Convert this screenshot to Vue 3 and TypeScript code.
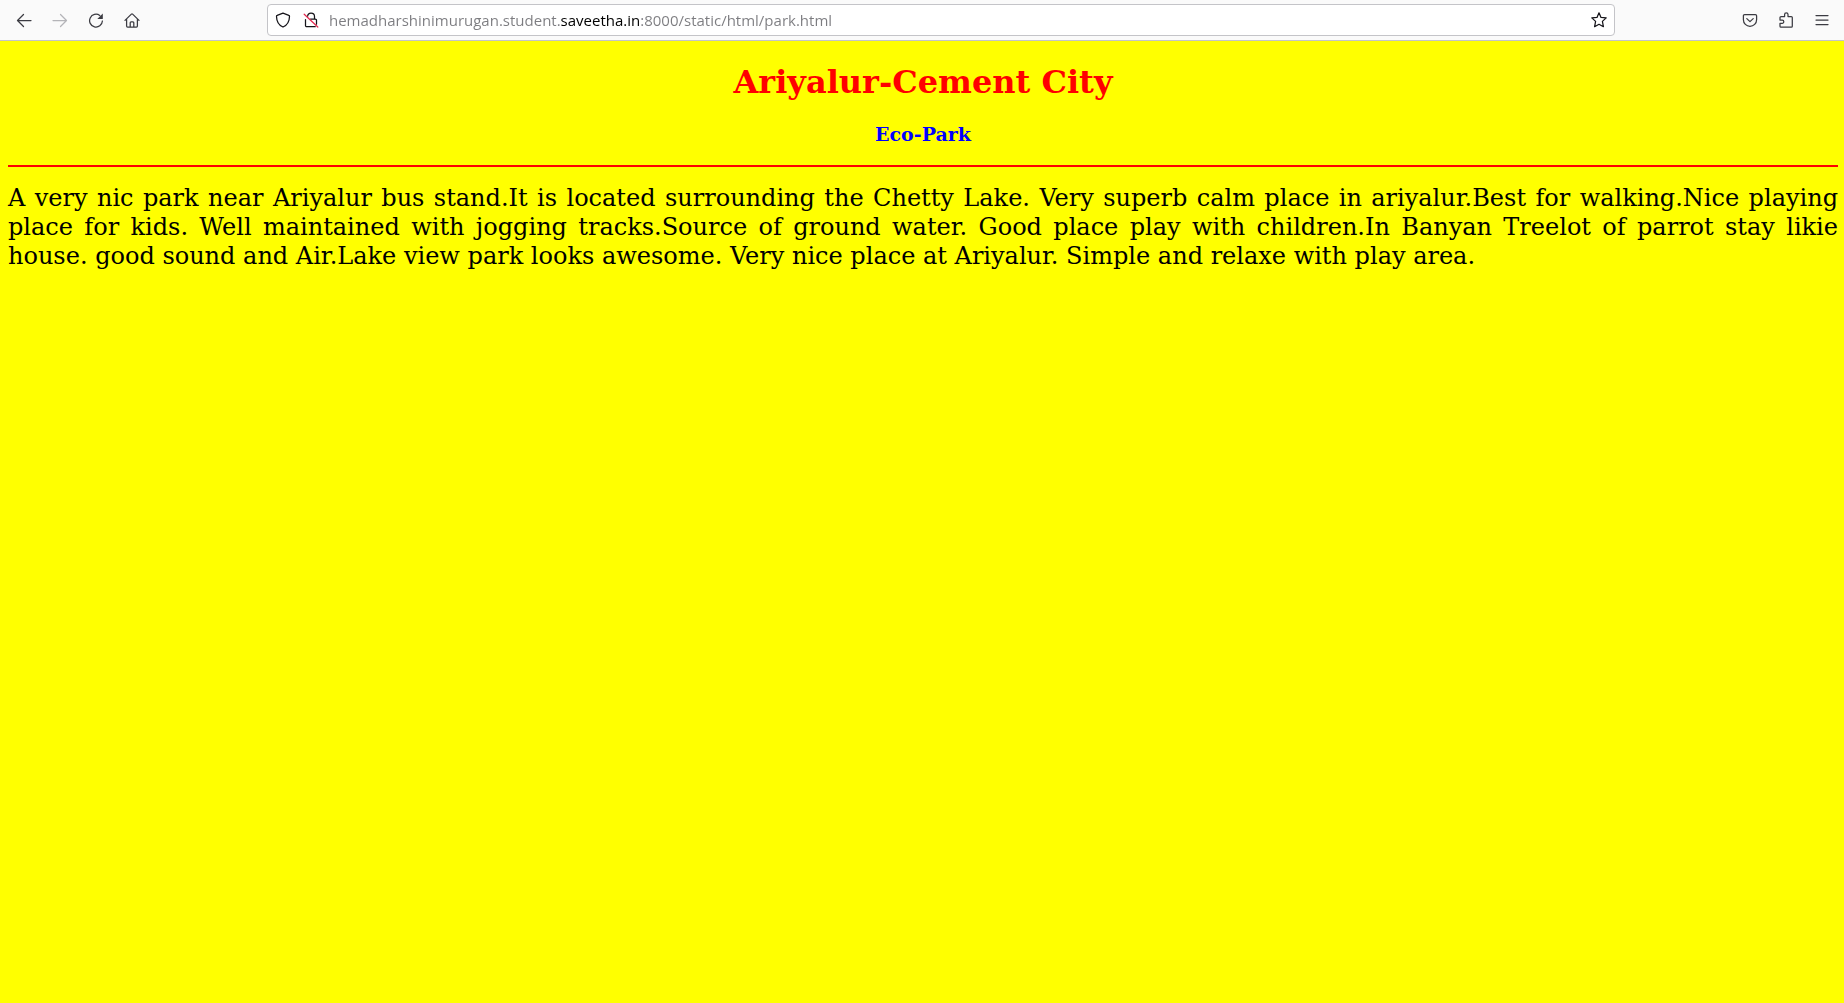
<script setup lang="ts">
import { ref } from 'vue'

const address = ref('hemadharshinimurugan.student.saveetha.in:8000/static/html/park.html')
</script>

<template>
  <div class="browser">
    <header class="toolbar">
      <nav class="group" aria-label="Navigation">
        <button type="button" aria-label="Back">
          <svg viewBox="0 0 16 16"><path d="M15 8.5H1.8M7.5 2.5l-6 6 6 6" /></svg>
        </button>
        <button type="button" aria-label="Forward" disabled>
          <svg viewBox="0 0 16 16"><path d="M1 8.5h13.2M8.5 2.5l6 6-6 6" /></svg>
        </button>
        <button type="button" aria-label="Reload">
          <svg viewBox="0 0 16 16">
            <path d="M11.8 3.5A6.4 6.4 0 1 0 14.4 9" />
            <path class="solid" d="M14.8 1.6v5a.5.5 0 0 1-.5.5H9.3z" />
          </svg>
        </button>
        <button type="button" aria-label="Home">
          <svg viewBox="0 0 16 16">
            <path d="M1 8.4 7.4 2.1a.9.9 0 0 1 1.2 0L15 8.4M2.6 7v7a1 1 0 0 0 1 1h8.8a1 1 0 0 0 1-1V7M6.2 15v-4.3a.9.9 0 0 1 .9-.9h1.8a.9.9 0 0 1 .9.9V15" />
          </svg>
        </button>
      </nav>

      <div class="urlbar">
        <button type="button" aria-label="Tracking protection">
          <svg viewBox="0 0 16 16">
            <path d="M8 1.2 13.8 3.4a1 1 0 0 1 .7 1C14.4 9.6 12 13.2 8 15 4 13.2 1.6 9.6 1.5 4.4a1 1 0 0 1 .7-1z" />
          </svg>
        </button>
        <button type="button" aria-label="Connection not secure">
          <svg viewBox="0 0 16 16">
            <path d="M4.6 4.2C4.8 2.2 6.2 1 8 1c2 0 3.5 1.5 3.5 3.5V7M7.5 7h4.8a1.2 1.2 0 0 1 1.2 1.2v4M2.5 7.5v6a1.2 1.2 0 0 0 1.2 1.2h8.5" />
            <path class="strike" d="M1.2 2.2 14.8 15" />
          </svg>
        </button>
        <input v-model="address" class="address" type="text" aria-label="Address" spellcheck="false" />
        <button type="button" aria-label="Bookmark this page">
          <svg viewBox="0 0 16 16">
            <path d="M8 .8l2 4.6 5.2.5-3.8 3.5 1 5.3L8 12.3l-4.4 2.4 1-5.3L.8 5.9 6 5.4z" />
          </svg>
        </button>
      </div>

      <div class="group end">
        <button type="button" aria-label="Save to Pocket">
          <svg viewBox="0 0 16 16">
            <path d="M2.6 2.5h10.8a1.2 1.2 0 0 1 1.2 1.2v4a6.6 6.6 0 0 1-13.2 0v-4a1.2 1.2 0 0 1 1.2-1.2zM4.8 6.6 8 9.6l3.2-3" />
          </svg>
        </button>
        <button type="button" aria-label="Extensions">
          <svg viewBox="0 0 16 16">
            <path d="M2 6.9V5.6a1 1 0 0 1 1-1h3.6V2.6a1.7 1.7 0 0 1 3.4 0v2h3.3a1 1 0 0 1 1 1v8.6a1 1 0 0 1-1 1H3a1 1 0 0 1-1-1v-2.9h2.2a1.6 1.6 0 0 0 0-3.2H2z" />
          </svg>
        </button>
        <button type="button" aria-label="Open application menu">
          <svg viewBox="0 0 16 16"><path d="M2 3.5h12M2 8h12M2 12.5h12" /></svg>
        </button>
      </div>
    </header>

    <main class="page">
      <h1>Ariyalur-Cement City</h1>
      <h3>Eco-Park</h3>
      <hr />
      <p>
        A very nic park near Ariyalur bus stand.It is located surrounding the Chetty Lake. Very superb
        calm place in ariyalur.Best for walking.Nice playing place for kids. Well maintained with
        jogging tracks.Source of ground water. Good place play with children.In Banyan Treelot of
        parrot stay likie house. good sound and Air.Lake view park looks awesome. Very nice place at
        Ariyalur. Simple and relaxe with play area.
      </p>
    </main>
  </div>
</template>

<style>
body {
  margin: 0;
  background: #ffff00;
}
</style>

<style scoped>
.browser {
  display: flex;
  flex-direction: column;
  min-height: 100vh;
}

.toolbar {
  display: flex;
  align-items: center;
  box-sizing: border-box;
  height: 41px;
  padding: 0 4px 0 6px;
  border-bottom: 1px solid #c4c4c8;
  background: #fafafa;
}

.group {
  display: flex;
  flex: 0 0 261px;
}

.end {
  flex-basis: 225px;
  justify-content: flex-end;
}

button {
  display: flex;
  align-items: center;
  justify-content: center;
  width: 36px;
  height: 32px;
  padding: 0;
  border: 0;
  background: none;
  color: #3b3b42;
}

button:disabled {
  color: #b4b4b8;
}

svg {
  width: 16px;
  height: 16px;
  fill: none;
  stroke: currentColor;
  stroke-width: 1.25;
  stroke-linecap: round;
  stroke-linejoin: round;
}

.solid {
  fill: currentColor;
  stroke: none;
}

.strike {
  stroke: #e2284f;
}

.urlbar {
  display: flex;
  flex: 1;
  align-items: center;
  box-sizing: border-box;
  height: 32px;
  padding: 0 1px;
  border: 1px solid #c4c4c8;
  border-radius: 4px;
  background: #ffffff;
}

.urlbar button {
  width: 28px;
  height: 30px;
  color: #15141a;
}

/* The registrable domain is darker than the rest of the address. */
.address {
  flex: 1;
  min-width: 0;
  height: 30px;
  padding: 0 4px;
  border: 0;
  outline: 0;
  background: linear-gradient(90deg, #7c7c80 235px, #000000 235px 315px, #7c7c80 315px);
  background-clip: text;
  color: transparent;
  caret-color: #000000;
  font-family: "Open Sans", "Noto Sans", sans-serif;
  font-size: 15px;
}

.page {
  flex: 1;
  padding: 22px 6px 0 8px;
  background: #ffff00;
  color: #000000;
  font-family: "DejaVu Serif", serif;
}

h1 {
  margin: 0 0 22px;
  color: #ff0000;
  font-size: 32px;
  line-height: 38px;
  text-align: center;
}

h3 {
  margin: 0 0 20px;
  color: #0000ff;
  font-size: 19px;
  line-height: 22px;
  text-align: center;
}

hr {
  height: 2px;
  margin: 0 0 17px;
  border: 0;
  background: #ff0000;
}

p {
  margin: 0;
  font-size: 24px;
  line-height: 29px;
  text-align: justify;
}
</style>
